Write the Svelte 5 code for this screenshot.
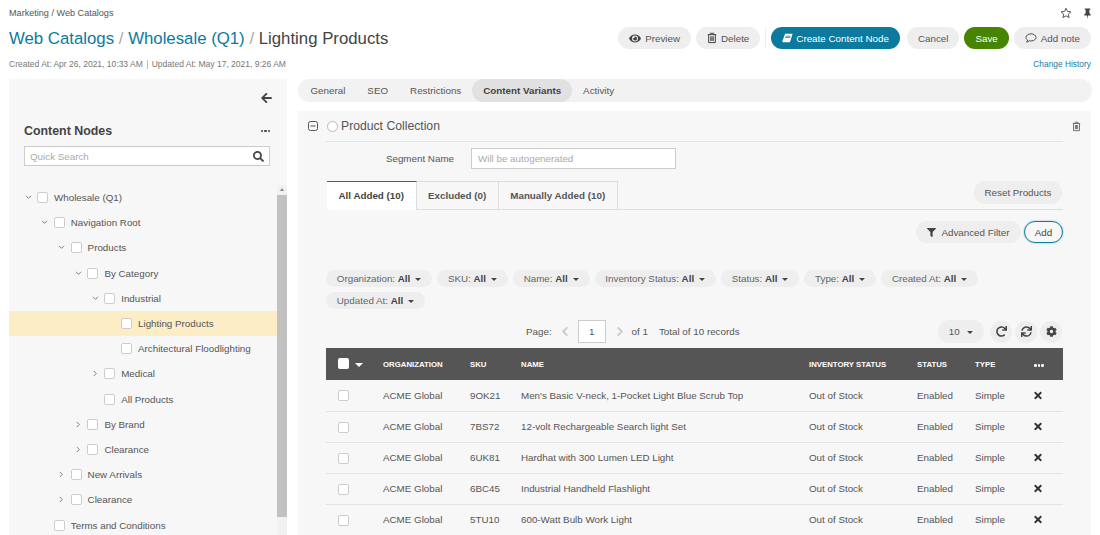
<script>
  const tree = [
    { l: 0, c: 'down', t: 'Wholesale (Q1)' },
    { l: 1, c: 'down', t: 'Navigation Root' },
    { l: 2, c: 'down', t: 'Products' },
    { l: 3, c: 'down', t: 'By Category' },
    { l: 4, c: 'down', t: 'Industrial' },
    { l: 5, t: 'Lighting Products', sel: true },
    { l: 5, t: 'Architectural Floodlighting' },
    { l: 4, c: 'right', t: 'Medical' },
    { l: 4, t: 'All Products' },
    { l: 3, c: 'right', t: 'By Brand' },
    { l: 3, c: 'right', t: 'Clearance' },
    { l: 2, c: 'right', t: 'New Arrivals' },
    { l: 2, c: 'right', t: 'Clearance' },
    { l: 1, t: 'Terms and Conditions' }
  ];
  const filters = ['Organization', 'SKU', 'Name', 'Inventory Status', 'Status', 'Type', 'Created At', 'Updated At'];
  const rows = [
    ['9OK21', "Men's Basic V-neck, 1-Pocket Light Blue Scrub Top"],
    ['7BS72', '12-volt Rechargeable Search light Set'],
    ['6UK81', 'Hardhat with 300 Lumen LED Light'],
    ['6BC45', 'Industrial Handheld Flashlight'],
    ['5TU10', '600-Watt Bulb Work Light']
  ];
  const tabs = ['General', 'SEO', 'Restrictions', 'Content Variants', 'Activity'];
  const times = 'M242.72 256l100.07-100.07c12.28-12.28 12.28-32.19 0-44.48l-22.24-22.24c-12.28-12.28-32.19-12.28-44.48 0L176 189.28 75.93 89.21c-12.28-12.28-32.19-12.28-44.48 0L9.21 111.45c-12.28 12.28-12.28 32.19 0 44.48L109.28 256 9.21 356.07c-12.28 12.28-12.28 32.19 0 44.48l22.24 22.24c12.28 12.28 32.2 12.28 44.48 0L176 322.72l100.07 100.07c12.28 12.28 32.2 12.28 44.48 0l22.24-22.24c12.28-12.28 12.28-32.19 0-44.48L242.72 256z';
</script>

<div class="page">
  <div class="crumbs">
    <span>Marketing / Web Catalogs</span>
    <span class="top-icons">
      <svg class="star" viewBox="0 0 24 24" width="12" height="12"><path d="M12 2.5l2.9 6.3 6.9.8-5.1 4.7 1.4 6.8-6.1-3.4-6.1 3.4 1.4-6.8-5.1-4.7 6.9-.8z" fill="none" stroke="#444" stroke-width="1.8" stroke-linejoin="round"/></svg>
      <svg viewBox="0 0 24 24" width="11" height="12"><path d="M6 2h12v2.5l-2 1v6.5l3 3v2.5h-6l-1 7h-0.2l-1-7H5V15l3-3V5.500l-2-1z" fill="#444"/></svg>
    </span>
  </div>

  <div class="title-row">
    <h1><span class="lnk">Web Catalogs</span> <i>/</i> <span class="lnk">Wholesale (Q1)</span> <i>/</i> Lighting Products</h1>
    <div class="actions">
      <button class="btn">
        <svg viewBox="0 0 576 512" width="12" height="11"><path fill="#444" d="M572.52 241.4C518.29 135.59 410.93 64 288 64S57.68 135.64 3.48 241.41a32.35 32.35 0 0 0 0 29.19C57.71 376.41 165.07 448 288 448s230.32-71.64 284.52-177.41a32.35 32.35 0 0 0 0-29.19zM288 400a144 144 0 1 1 144-144 143.93 143.93 0 0 1-144 144zm0-240a95.31 95.31 0 0 0-25.31 3.79 47.85 47.85 0 0 1-66.9 66.9A95.78 95.78 0 1 0 288 160z"/></svg>
        Preview
      </button>
      <button class="btn">
        <svg viewBox="0 0 12 14" width="10" height="12"><path fill="none" stroke="#444" stroke-width="1.2" d="M1 3h10M4 3V1.300h4V3M2 3v9.500h8V3M4.500 5v5.500M6 5v5.500M7.500 5v5.500"/></svg>
        Delete
      </button>
      <span class="divider"></span>
      <button class="btn primary">
        <svg viewBox="0 0 14 12" width="11" height="10"><path fill="#fff" d="M4 .5h9.500L10.500 10c-.3 1-1 1.500-2 1.500H2C.8 11.500.3 10.500.6 9.500zM4.500 3v1h6.500V3zM4 5v1h6.500V5z" fill-rule="evenodd"/></svg>
        Create Content Node
      </button>
      <button class="btn">Cancel</button>
      <button class="btn save">Save</button>
      <button class="btn">
        <svg viewBox="0 0 14 12" width="12" height="10"><path fill="none" stroke="#444" stroke-width="1.100" d="M7 1c3.300 0 6 1.900 6 4.300S10.300 9.600 7 9.600c-.8 0-1.500-.1-2.200-.3C4 10.200 2.800 11 1.600 11c.7-.7 1.100-1.600 1.200-2.500C1.700 7.700 1 6.600 1 5.300 1 2.900 3.700 1 7 1z"/></svg>
        Add note
      </button>
    </div>
  </div>

  <div class="meta">
    <span>Created At: Apr 26, 2021, 10:33 AM</span>
    <span class="sep">Updated At: May 17, 2021, 9:26 AM</span>
    <span class="history">Change History</span>
  </div>

  <div class="main">
    <aside class="side">
      <div class="collapse">
        <svg viewBox="0 0 448 512" width="11" height="12"><path fill="#444" d="M257.5 445.1l-22.2 22.2c-9.4 9.4-24.6 9.4-33.9 0L7 273c-9.4-9.4-9.4-24.6 0-33.9L201.4 44.7c9.4-9.4 24.6-9.4 33.9 0l22.2 22.2c9.5 9.5 9.3 25-.4 34.3L136.6 216H424c13.3 0 24 10.7 24 24v32c0 13.3-10.7 24-24 24H136.6l120.500 114.8c9.800 9.300 10 24.800.4 34.300z"/></svg>
      </div>
      <div class="side-head">
        <h2>Content Nodes</h2>
        <span class="dots"><b></b><b></b><b></b></span>
      </div>
      <div class="search">
        <span>Quick Search</span>
        <svg viewBox="0 0 512 512" width="11" height="11"><path fill="#444" d="M505 442.7L405.3 343c-4.500-4.500-10.600-7-17-7H372c27.600-35.300 44-79.700 44-128C416 93.100 322.900 0 208 0S0 93.100 0 208s93.100 208 208 208c48.300 0 92.700-16.400 128-44v16.300c0 6.400 2.500 12.500 7 17l99.700 99.700c9.400 9.400 24.600 9.400 33.900 0l28.300-28.300c9.400-9.400 9.400-24.600.1-34zM208 336c-70.700 0-128-57.200-128-128 0-70.700 57.200-128 128-128 70.700 0 128 57.200 128 128 0 70.700-57.200 128-128 128z"/></svg>
      </div>
      <div class="tree-wrap">
        <div class="tree">
          {#each tree as n}
            <div class="node" class:sel={n.sel} style="padding-left:{n.l * 16.8 + 14}px">
              <span class="chev">
                {#if n.c === 'down'}
                  <svg viewBox="0 0 8 6" width="7" height="5"><path d="M1 1l3 3 3-3" fill="none" stroke="#666" stroke-width="1"/></svg>
                {:else if n.c === 'right'}
                  <svg viewBox="0 0 6 8" width="5" height="7"><path d="M1 1l3 3-3 3" fill="none" stroke="#666" stroke-width="1"/></svg>
                {/if}
              </span>
              <span class="check"></span>
              <span class="label">{n.t}</span>
            </div>
          {/each}
        </div>
        <div class="scrollbar">
          <span class="arrow"></span>
          <span class="thumb"></span>
        </div>
      </div>
    </aside>

    <section class="content">
      <nav class="tabs">
        {#each tabs as t}
          <span class="tab" class:active={t === 'Content Variants'}>{t}</span>
        {/each}
      </nav>
      <div class="panel">
        <div class="panel-head">
          <svg class="minus" viewBox="0 0 10 10" width="10" height="10"><rect x=".5" y=".5" width="9" height="9" rx="2" fill="none" stroke="#555"/><path d="M2.500 5h5" stroke="#555"/></svg>
          <span class="radio"></span>
          <span class="pc">Product Collection</span>
          <svg class="trash" viewBox="0 0 12 14" width="9" height="11"><path fill="none" stroke="#666" stroke-width="1.200" d="M1 3h10M4 3V1.300h4V3M2 3v9.500h8V3M4.500 5v5.500M6 5v5.500M7.500 5v5.500"/></svg>
        </div>
        <div class="body">
          <div class="segment">
            <label for="seg">Segment Name</label>
            <input id="seg" placeholder="Will be autogenerated" />
          </div>
          <div class="subtabs">
            <span class="sub active">All Added (10)</span>
            <span class="sub">Excluded (0)</span>
            <span class="sub">Manually Added (10)</span>
            <button class="btn reset">Reset Products</button>
          </div>
          <div class="tools">
            <button class="btn filter">
              <svg viewBox="0 0 512 512" width="9" height="9"><path fill="#444" d="M487.976 0H24.028C2.710 0-8.047 25.866 7.058 40.971L192 225.941V432c0 7.831 3.821 15.170 10.237 19.662l80 55.980C298.020 518.690 320 507.493 320 487.980V225.941l184.947-184.970C520.021 25.896 509.338 0 487.976 0z"/></svg>
              Advanced Filter
            </button>
            <button class="btn add">Add</button>
          </div>
          <div class="chips">
            {#each filters as f}
              <span class="chip">{f}: <b>All</b><i class="caret"></i></span>
            {/each}
          </div>
          <div class="pager">
            <div class="pages">
              <span>Page:</span>
              <svg viewBox="0 0 8 12" width="8" height="11"><path d="M6.500 1.500L2 6l4.500 4.500" fill="none" stroke="#ccc" stroke-width="2.200"/></svg>
              <span class="page-input">1</span>
              <svg viewBox="0 0 8 12" width="8" height="11"><path d="M1.500 1.500L6 6l-4.500 4.500" fill="none" stroke="#ccc" stroke-width="2.200"/></svg>
              <span class="of">of 1</span>
              <span class="total">Total of 10 records</span>
            </div>
            <div class="page-tools">
              <span class="size">10 <i class="caret"></i></span>
              <span class="round"><svg viewBox="0 0 512 512" width="11" height="11"><path fill="#444" d="M500.330 0h-47.410a12 12 0 0 0-12 12.570l4 82.760A247.420 247.420 0 0 0 256 8C119.340 8 7.900 119.530 8 256.190 8.100 393.070 119.100 504 256 504a247.100 247.100 0 0 0 166.180-63.910 12 12 0 0 0 .48-17.430l-34-34a12 12 0 0 0-16.380-.55A176 176 0 1 1 402.100 157.800l-101.530-4.870a12 12 0 0 0-12.570 12v47.410a12 12 0 0 0 12 12h200.330a12 12 0 0 0 12-12V12a12 12 0 0 0-12-12z"/></svg></span>
              <span class="round"><svg viewBox="0 0 512 512" width="11" height="11"><path fill="#444" d="M440.650 12.570l4 82.770A247.160 247.160 0 0 0 255.830 8C134.730 8 33.910 94.920 12.290 209.820A12 12 0 0 0 24.090 224h49.050a12 12 0 0 0 11.670-9.260 175.910 175.910 0 0 1 317-56.940l-101.460-4.860a12 12 0 0 0-12.570 12v47.410a12 12 0 0 0 12 12H500a12 12 0 0 0 12-12V12a12 12 0 0 0-12-12h-47.370a12 12 0 0 0-11.980 12.570zM255.830 432a175.610 175.610 0 0 1-146-77.800l101.800 4.870a12 12 0 0 0 12.570-12v-47.400a12 12 0 0 0-12-12H12a12 12 0 0 0-12 12V500a12 12 0 0 0 12 12h47.350a12 12 0 0 0 12-12.600l-4.150-82.570A247.170 247.170 0 0 0 255.830 504c121.110 0 221.930-86.920 243.550-201.820a12 12 0 0 0-11.800-14.180h-49.050a12 12 0 0 0-11.670 9.260A175.860 175.860 0 0 1 255.830 432z"/></svg></span>
              <span class="round"><svg viewBox="0 0 512 512" width="11" height="11"><path fill="#444" d="M487.400 315.700l-42.600-24.600c4.300-23.200 4.300-47 0-70.200l42.600-24.600c4.900-2.800 7.100-8.600 5.500-14-11.100-35.600-30-67.800-54.700-94.600-3.800-4.100-10-5.100-14.800-2.300L380.800 110c-17.900-15.400-38.500-27.300-60.800-35.100V25.800c0-5.600-3.900-10.500-9.400-11.700-36.700-8.200-74.300-7.800-109.200 0-5.500 1.200-9.400 6.100-9.400 11.700V75c-22.200 7.900-42.800 19.800-60.800 35.100L88.700 85.500c-4.900-2.800-11-1.900-14.800 2.300-24.700 26.700-43.600 58.900-54.700 94.600-1.700 5.400.6 11.200 5.500 14L67.300 221c-4.300 23.200-4.300 47 0 70.200l-42.600 24.600c-4.900 2.800-7.100 8.600-5.500 14 11.100 35.600 30 67.800 54.700 94.600 3.800 4.100 10 5.100 14.800 2.300l42.600-24.600c17.900 15.400 38.500 27.300 60.800 35.100v49.200c0 5.600 3.900 10.500 9.400 11.700 36.700 8.200 74.300 7.800 109.200 0 5.500-1.200 9.400-6.100 9.400-11.700v-49.200c22.200-7.900 42.800-19.800 60.800-35.100l42.600 24.600c4.900 2.800 11 1.900 14.800-2.300 24.700-26.700 43.600-58.900 54.700-94.600 1.500-5.500-.7-11.300-5.600-14.100zM256 336c-44.100 0-80-35.900-80-80s35.900-80 80-80 80 35.900 80 80-35.900 80-80 80z"/></svg></span>
            </div>
          </div>
          <table>
            <colgroup>
              <col class="c0" /><col class="c1" /><col class="c2" /><col class="c3" /><col class="c4" /><col class="c5" /><col class="c6" /><col class="c7" />
            </colgroup>
            <thead>
              <tr>
                <th class="first"><span class="check head-check"></span><i class="caret white"></i></th>
                <th>ORGANIZATION</th><th>SKU</th><th>NAME</th><th>INVENTORY STATUS</th><th>STATUS</th><th>TYPE</th>
                <th><span class="dots light"><b></b><b></b><b></b></span></th>
              </tr>
            </thead>
            <tbody>
              {#each rows as r}
                <tr>
                  <td class="first"><span class="check row-check"></span></td>
                  <td>ACME Global</td><td>{r[0]}</td><td>{r[1]}</td><td>Out of Stock</td><td>Enabled</td><td>Simple</td>
                  <td><svg viewBox="0 0 352 512" width="8" height="11"><path fill="#333" d={times}/></svg></td>
                </tr>
              {/each}
            </tbody>
          </table>
        </div>
      </div>
    </section>
  </div>
</div>

<style>
  :global(body) { margin: 0; background: #fff; }
  .page {
    height: 535px; overflow: hidden; box-sizing: border-box; padding: 0 8px 0 9px;
    font-family: "Liberation Sans", Arial, sans-serif; font-size: 9.8px; color: #555;
  }
  svg { display: block; flex: none; }
  .crumbs { height: 27px; box-sizing: border-box; padding-bottom: 2px; display: flex; justify-content: space-between; align-items: center; font-size: 9.1px; color: #555; }
  .top-icons { display: flex; gap: 10px; align-items: center; margin-right: -1px; }
  .title-row { display: flex; justify-content: space-between; align-items: center; height: 22px; }
  h1 { margin: 1px 0 0; font-weight: 400; font-size: 16.8px; color: #444; line-height: 21px; }
  h1 i { font-style: normal; color: #aaa; }
  .lnk { color: #0c7a9e; }
  .actions { display: flex; align-items: center; gap: 5px; margin-right: 1px; }
  .btn {
    height: 22px; border: 0; border-radius: 11px; background: #eee; color: #555; padding: 0 11px;
    font: 9.8px "Liberation Sans", Arial, sans-serif; display: inline-flex; align-items: center; gap: 4px;
  }
  .divider { width: 1px; height: 22px; background: #eee; }
  .primary { background: #0b7a9e; color: #fff; padding: 0 11px; gap: 3px; margin-right: 2px; }
  .save { background: #478400; color: #fff; }
  .meta { display: flex; height: 30px; align-items: center; font-size: 8.5px; color: #777; }
  .meta .sep { margin-left: 4px; padding-left: 4px; border-left: 1px solid #bbb; line-height: 9px; }
  .history { margin-left: auto; margin-right: 1px; color: #1b7ba0; font-size: 8.4px; }
  .main { display: flex; gap: 11px; align-items: stretch; }
  .side { width: 278px; height: 456px; flex: none; background: #f7f7f7; display: flex; flex-direction: column; overflow: hidden; }
  .collapse { display: flex; justify-content: flex-end; padding: 13px 15px 0 0; height: 25px; }
  .side-head { display: flex; justify-content: space-between; align-items: center; margin: 6px 17px 0 15px; }
  h2 { margin: 0; font-size: 12.4px; font-weight: 700; color: #444; line-height: 16px; }
  .dots { display: inline-flex; gap: 1px; }
  .dots b { width: 2.500px; height: 2.500px; border-radius: 50%; background: #444; }
  .dots.light b { background: #fff; }
  .search {
    margin: 7px 17px 0 15px; height: 20px; box-sizing: border-box; background: #fff; border: 1px solid #ccc;
    display: flex; justify-content: space-between; align-items: center; padding: 0 5px; color: #aaa;
  }
  .tree-wrap { flex: 1; display: flex; margin-top: 19px; min-height: 0; }
  .tree { flex: 1; }
  .node { height: 25.2px; display: flex; align-items: center; color: #555; box-sizing: border-box; }
  .node.sel { background: #fdedc4; }
  .chev { width: 10px; margin-right: 4px; display: flex; justify-content: center; }
  .check { width: 11px; height: 11px; box-sizing: border-box; flex: none; display: inline-block; border: 1px solid #ccc; border-radius: 2px; background: #fff; }
  .label { margin-left: 6px; }
  .scrollbar { width: 10px; background: #f1f1f1; display: flex; flex-direction: column; }
  .arrow { height: 10px; flex: none; position: relative; }
  .arrow::after { content: ""; position: absolute; left: 3px; top: 3px; border: 2px solid transparent; border-bottom: 3px solid #888; border-top: 0; }
  .thumb { width: 100%; height: 322px; background: #c1c1c1; }
  .content { flex: 1; min-width: 0; display: flex; flex-direction: column; gap: 9px; }
  .tabs { height: 23px; background: #f2f2f2; border-radius: 12px; display: flex; align-items: center; padding-left: 1.5px; }
  .tab { padding: 0 11px; height: 23px; line-height: 23px; border-radius: 12px; color: #555; }
  .tab.active { background: #e1e1e1; font-weight: 700; color: #444; }
  .panel { background: #f7f7f7; height: 424px; width: 793px; overflow: hidden; }
  .panel-head { display: flex; align-items: center; height: 30px; padding-left: 10px; }
  .radio { width: 11px; height: 11px; margin-left: 9px; box-sizing: border-box; border: 1px solid #bbb; border-radius: 50%; background: #fff; }
  .pc { margin-left: 3px; font-size: 12.2px; color: #555; }
  .trash { margin-left: auto; margin-right: 10px; }
  .body { margin: 0 28px; border-top: 1px solid #e3e3e3; }
  .segment { display: flex; align-items: center; height: 21px; margin-top: 6px; }
  .segment label { width: 128px; text-align: right; margin-right: 17px; color: #555; }
  .segment input {
    width: 205px; height: 21px; box-sizing: border-box; border: 1px solid #ccc; background: #fff; padding: 0 6px;
    font: 9.8px "Liberation Sans", Arial, sans-serif; outline: 0;
  }
  .segment input::placeholder { color: #aaa; }
  .subtabs { display: flex; align-items: flex-start; height: 28px; margin-top: 12px; padding-left: 1px; border-bottom: 1px solid #ddd; }
  .sub { height: 28px; box-sizing: border-box; padding: 0 11.5px; line-height: 28px; border: 1px solid #ddd; border-left: 0; border-bottom: 0; font-weight: 700; color: #555; }
  .sub.active { background: #fff; border-top: 1px solid #0b7a9e; height: 29px; color: #444; }
  .reset { margin-left: auto; margin-right: 1px; height: 23px; padding: 0 10.5px; }
  .tools { display: flex; justify-content: flex-end; gap: 3px; margin-top: 11px; }
  .filter { gap: 5px; padding: 0 11.5px; }
  .add { background: transparent; border: 1.5px solid #0b7a9e; box-sizing: border-box; box-shadow: 0 0 2px #0b7a9e80; color: #444; width: 39px; padding: 0; justify-content: center; }
  .chips { display: flex; flex-wrap: wrap; gap: 5px; margin-top: 27px; }
  .chip { height: 17px; line-height: 17px; padding: 0 10.8px; border-radius: 9px; background: #eee; color: #666; }
  .chip b { color: #444; }
  .caret { display: inline-block; border: 3.500px solid transparent; border-top: 3.500px solid #444; border-bottom: 0; margin-left: 5px; vertical-align: 1px; }
  .caret.white { border-width: 4px 4px 0; border-top-color: #fff; vertical-align: 2px; }
  .pager { display: flex; height: 23px; margin-top: 11px; align-items: center; position: relative; justify-content: flex-end; }
  .pages { display: flex; align-items: center; gap: 9px; position: absolute; left: 200px; }
  .page-input { width: 28px; height: 23px; box-sizing: border-box; border: 1px solid #ccc; background: #fff; text-align: center; line-height: 21px; margin-right: 1px; }
  .of { margin-left: -1px; }
  .total { margin-left: 2px; }
  .page-tools { display: flex; align-items: center; gap: 3px; margin-right: 1px; }
  .size { width: 46px; height: 23px; line-height: 23px; text-align: center; border-radius: 12px; background: #eee; margin-right: 3px; }
  .round { width: 22px; height: 22px; border-radius: 50%; background: #eee; display: flex; align-items: center; justify-content: center; }
  table { border-collapse: collapse; table-layout: fixed; width: 737px; margin-top: 5px; }
  .c0 { width: 57px; } .c1 { width: 87px; } .c2 { width: 51px; } .c3 { width: 288px; } .c4 { width: 108px; } .c5 { width: 58px; } .c6 { width: 59px; } .c7 { width: 29px; }
  th { background: #555; color: #fff; font-size: 7.8px; font-weight: 700; text-align: left; height: 32px; padding: 0; border: 0; }
  td { height: 31px; box-sizing: border-box; padding: 0; border-bottom: 1px solid #e3e3e3; color: #555; }
  .first { padding-left: 12px; }
  .head-check { border: 0; }
  .row-check { display: block; margin-top: 1px; }
  .first .caret { margin-left: 6px; }
</style>
